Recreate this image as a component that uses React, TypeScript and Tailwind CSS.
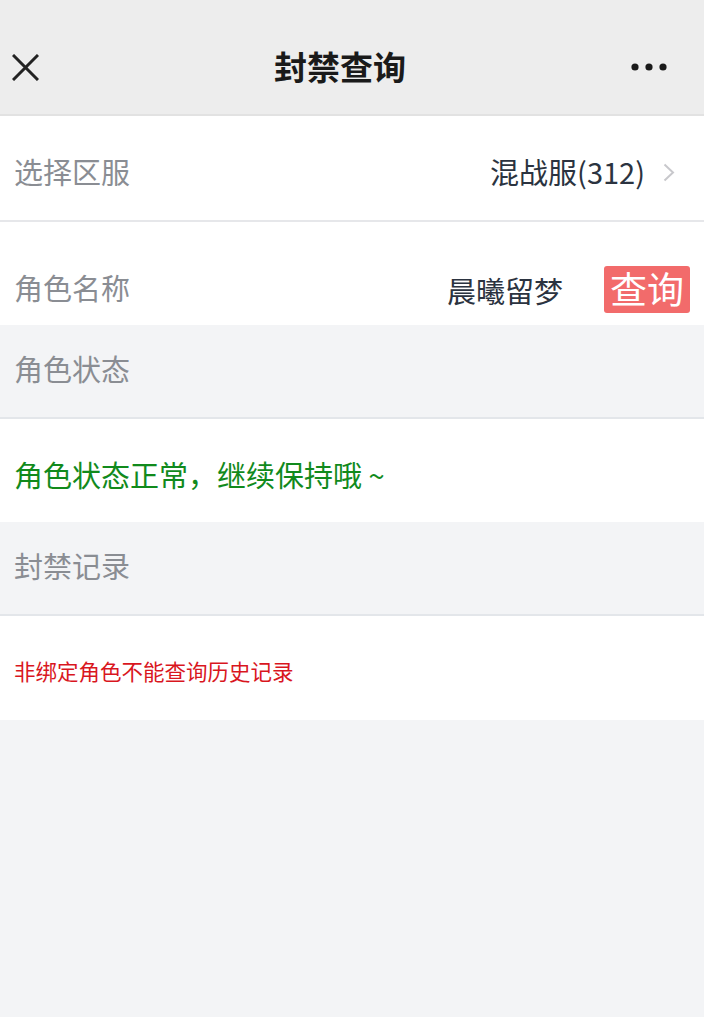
import React from "react";

const font = { fontFamily: '"Noto Sans CJK SC", "Noto Sans", sans-serif' };

export default function App() {
  return (
    <div
      className="min-h-[1017px] w-[704px] bg-[#f3f4f6] [font-family:'Noto_Sans_CJK_SC','Noto_Sans',sans-serif]"
    >
      {/* Header */}
      <div className="flex h-[114px] items-center bg-[#ededed] pt-[20px]">
        <div className="flex w-[64px] items-center pl-[12px]">
          <svg width="27" height="27" viewBox="0 0 27 27">
            <path d="M1 1 L26 26 M26 1 L1 26" stroke="#222" strokeWidth="3" fill="none" />
          </svg>
        </div>
        <div className="flex-1 pb-[2px] text-center text-[33px] font-bold leading-none text-[#1a1a1a]">
          封禁查询
        </div>
        <div className="flex w-[88px] items-center pl-[15px]">
          <svg width="36" height="8" viewBox="0 0 36 8">
            <circle cx="4" cy="4" r="3.6" fill="#1a1a1a" />
            <circle cx="18" cy="4" r="3.6" fill="#1a1a1a" />
            <circle cx="32" cy="4" r="3.6" fill="#1a1a1a" />
          </svg>
        </div>
      </div>
      <div className="h-[2px] bg-[#e2e2e2]" />

      {/* Select server */}
      <div className="flex h-[104px] items-center justify-between bg-white pl-[14px] pr-[29px] pt-[6px]">
        <span className="text-[29px] leading-none text-[#8a8d93]">选择区服</span>
        <div className="flex items-center gap-[18px]">
          <span className="text-[29px] leading-none text-[#2b3340]">混战服(312)</span>
          <svg width="12" height="19" viewBox="0 0 12 19" className="mt-[2px]">
            <path d="M1.5 1.5 L10 9.5 L1.5 17.5" stroke="#c8c8cc" strokeWidth="2" fill="none" />
          </svg>
        </div>
      </div>
      <div className="h-[2px] bg-[#e6e7ea]" />

      {/* Role name */}
      <div className="flex h-[103px] items-center justify-between bg-white pl-[14px] pr-[14px] pt-[31px]">
        <span className="mb-[4px] text-[29px] leading-none text-[#8a8d93]">角色名称</span>
        <div className="flex items-center gap-[41px]">
          <span className="mt-[2px] text-[29px] leading-none text-[#2b3340]">晨曦留梦</span>
          <div className="flex h-[47px] w-[86px] items-center justify-center rounded-[3px] bg-[#f26b6b] pb-[2px] text-[37px] leading-none text-white">
            查询
          </div>
        </div>
      </div>

      {/* Role status section */}
      <div className="flex h-[92px] items-center bg-[#f3f4f6] pb-[5px] pl-[14px]">
        <span className="text-[29px] leading-none text-[#8a8d93]">角色状态</span>
      </div>
      <div className="h-[2px] bg-[#e3e6ea]" />
      <div className="flex h-[103px] items-center bg-white pl-[14px] pt-[7px]">
        <span className="text-[29px] leading-none text-[#118a1c]">角色状态正常，继续保持哦 ~</span>
      </div>

      {/* Ban record section */}
      <div className="flex h-[92px] items-center bg-[#f3f4f6] pb-[5px] pl-[14px]">
        <span className="text-[29px] leading-none text-[#8a8d93]">封禁记录</span>
      </div>
      <div className="h-[2px] bg-[#e3e6ea]" />
      <div className="flex h-[104px] items-center bg-white pl-[14px] pt-[6px]">
        <span className="text-[21.5px] leading-none text-[#d9161e]" style={font}>
          非绑定角色不能查询历史记录
        </span>
      </div>
    </div>
  );
}
